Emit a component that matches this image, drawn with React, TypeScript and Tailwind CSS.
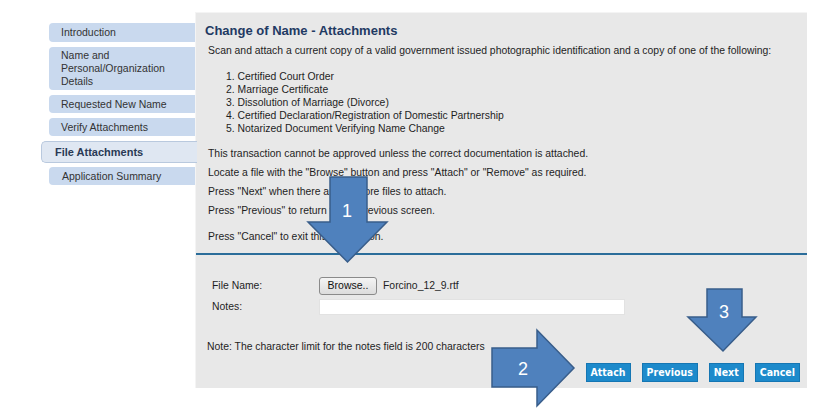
import React from 'react';

const navItems = [
    { name: 'Introduction', h: 'h-[19px]' },
    { name: 'Name and Personal/Organization Details', h: 'h-[43px]' },
    { name: 'Requested New Name', h: 'h-[18px]' },
    { name: 'Verify Attachments', h: 'h-[18px]' },
];

const docs = [
    'Certified Court Order',
    'Marriage Certificate',
    'Dissolution of Marriage (Divorce)',
    'Certified Declaration/Registration of Domestic Partnership',
    'Notarized Document Verifying Name Change',
];

function Sidebar() {
    return (
        <div className="flex w-[154px] shrink-0 flex-col pt-[23px] text-[10.5px] leading-[13px] text-[#333]" style={{ fontFamily: '"Liberation Sans", Arial, sans-serif' }}>
            {navItems.map((item, i) => (
                <div
                    key={item.name}
                    className={`ml-[8px] flex items-center rounded-l-[4px] bg-[#c9d9ee] pl-[12px] pr-[20px] ${item.h} ${i === 0 ? '' : 'mt-[5px]'}`}
                >
                    {item.name}
                </div>
            ))}
            <div className="relative z-10 mt-[5px] -mr-[2px] flex h-[22px] items-center rounded-l-[5px] border border-r-0 border-[#b9c9de] bg-[#dfe7f2] pl-[13px] text-[11px] font-bold text-[#2a3a55]">
                File Attachments
            </div>
            <div className="ml-[8px] mt-[4px] flex h-[18px] items-center rounded-l-[4px] bg-[#c9d9ee] pl-[13px]">
                Application Summary
            </div>
        </div>
    );
}

function Button({ label }: { label: string }) {
    return (
        <button
            className="h-[19px] border border-[#1576b3] bg-[#1d8acb] px-[4px] text-[10.5px] font-bold leading-none text-white"
            style={{ fontFamily: '"DejaVu Sans Condensed", "DejaVu Sans", Verdana, sans-serif' }}
        >
            {label}
        </button>
    );
}

function Panel() {
    return (
        <div
            className="mt-[12px] flex h-[376px] w-[612px] flex-col border-l border-t border-[#f4f4f4] bg-[#e8e8e8] text-[10.4px] text-[#1e1e1e]"
            style={{ fontFamily: '"Liberation Sans", Arial, sans-serif' }}
        >
            <div className="pl-[9px] pt-[9px]">
                <h1 className="text-[13px] font-bold leading-[18px] text-[#1f3a63]">Change of Name - Attachments</h1>
                <div className="pl-[3px]">
                    <p className="mt-[4px] leading-[14px]">
                        Scan and attach a current copy of a valid government issued photographic identification and a copy of one of the following:
                    </p>
                    <div className="mt-[12px] pl-[18px] leading-[13px]">
                        {docs.map((d, i) => (
                            <div key={d}>
                                {i + 1}. {d}
                            </div>
                        ))}
                    </div>
                    <div className="mt-[12px] flex flex-col gap-[5px] leading-[14px]">
                        <p>This transaction cannot be approved unless the correct documentation is attached.</p>
                        <p>Locate a file with the "Browse" button and press "Attach" or "Remove" as required.</p>
                        <p>Press "Next" when there are no more files to attach.</p>
                        <p>Press "Previous" to return to the previous screen.</p>
                        <p className="mt-[7px]">Press "Cancel" to exit this transaction.</p>
                    </div>
                </div>
            </div>

            <div className="mt-[9px] h-[2px] bg-[#2b6d9a]" />

            <div className="flex flex-1 flex-col pl-[16px] pr-[7px] pt-[22px] pb-[6px]">
                <div className="flex h-[18px] items-center">
                    <span className="w-[107px]">File Name:</span>
                    <span className="flex h-[18px] w-[58px] items-center justify-center rounded-[3px] border border-[#8a8a8a] bg-gradient-to-b from-[#f4f4f4] to-[#dcdcdc] text-[10.5px] text-[#111]">
                        Browse..
                    </span>
                    <span className="ml-[6px]">Forcino_12_9.rtf</span>
                </div>
                <div className="mt-[4px] flex h-[16px] items-center">
                    <span className="w-[107px]">Notes:</span>
                    <div className="h-[16px] w-[306px] border border-[#e2e2e2] bg-white" />
                </div>
                <p className="-ml-[5px] mt-[25px] leading-[14px]">Note: The character limit for the notes field is 200 characters</p>
                <div className="mt-auto flex justify-end gap-[11px]">
                    <Button label="Attach" />
                    <Button label="Previous" />
                    <Button label="Next" />
                    <Button label="Cancel" />
                </div>
            </div>
        </div>
    );
}

function Arrows() {
    const fill = '#4f81bd';
    const stroke = '#385d8a';
    return (
        <svg className="pointer-events-none absolute inset-0" width="820" height="409" viewBox="0 0 820 409">
            <polygon points="330,177 367,177 367,222 387,222 347.5,262 308,222 330,222" fill={fill} stroke={stroke} strokeWidth="1.5" />
            <polygon points="492,348 537,348 537,330 574,368 537,406 537,387 492,387" fill={fill} stroke={stroke} strokeWidth="1.5" />
            <polygon points="707,289 742,289 742,317 756,317 723,351 688,317 707,317" fill={fill} stroke={stroke} strokeWidth="1.5" />
            <g fill="white" fontSize="18" fontFamily='"Liberation Sans", Arial, sans-serif' textAnchor="middle">
                <text x="347" y="217">1</text>
                <text x="523" y="375">2</text>
                <text x="724" y="318">3</text>
            </g>
        </svg>
    );
}

export default function App() {
    return (
        <div className="relative flex h-[409px] w-[820px] overflow-hidden bg-white pl-[41px]">
            <Sidebar />
            <Panel />
            <Arrows />
        </div>
    );
}
